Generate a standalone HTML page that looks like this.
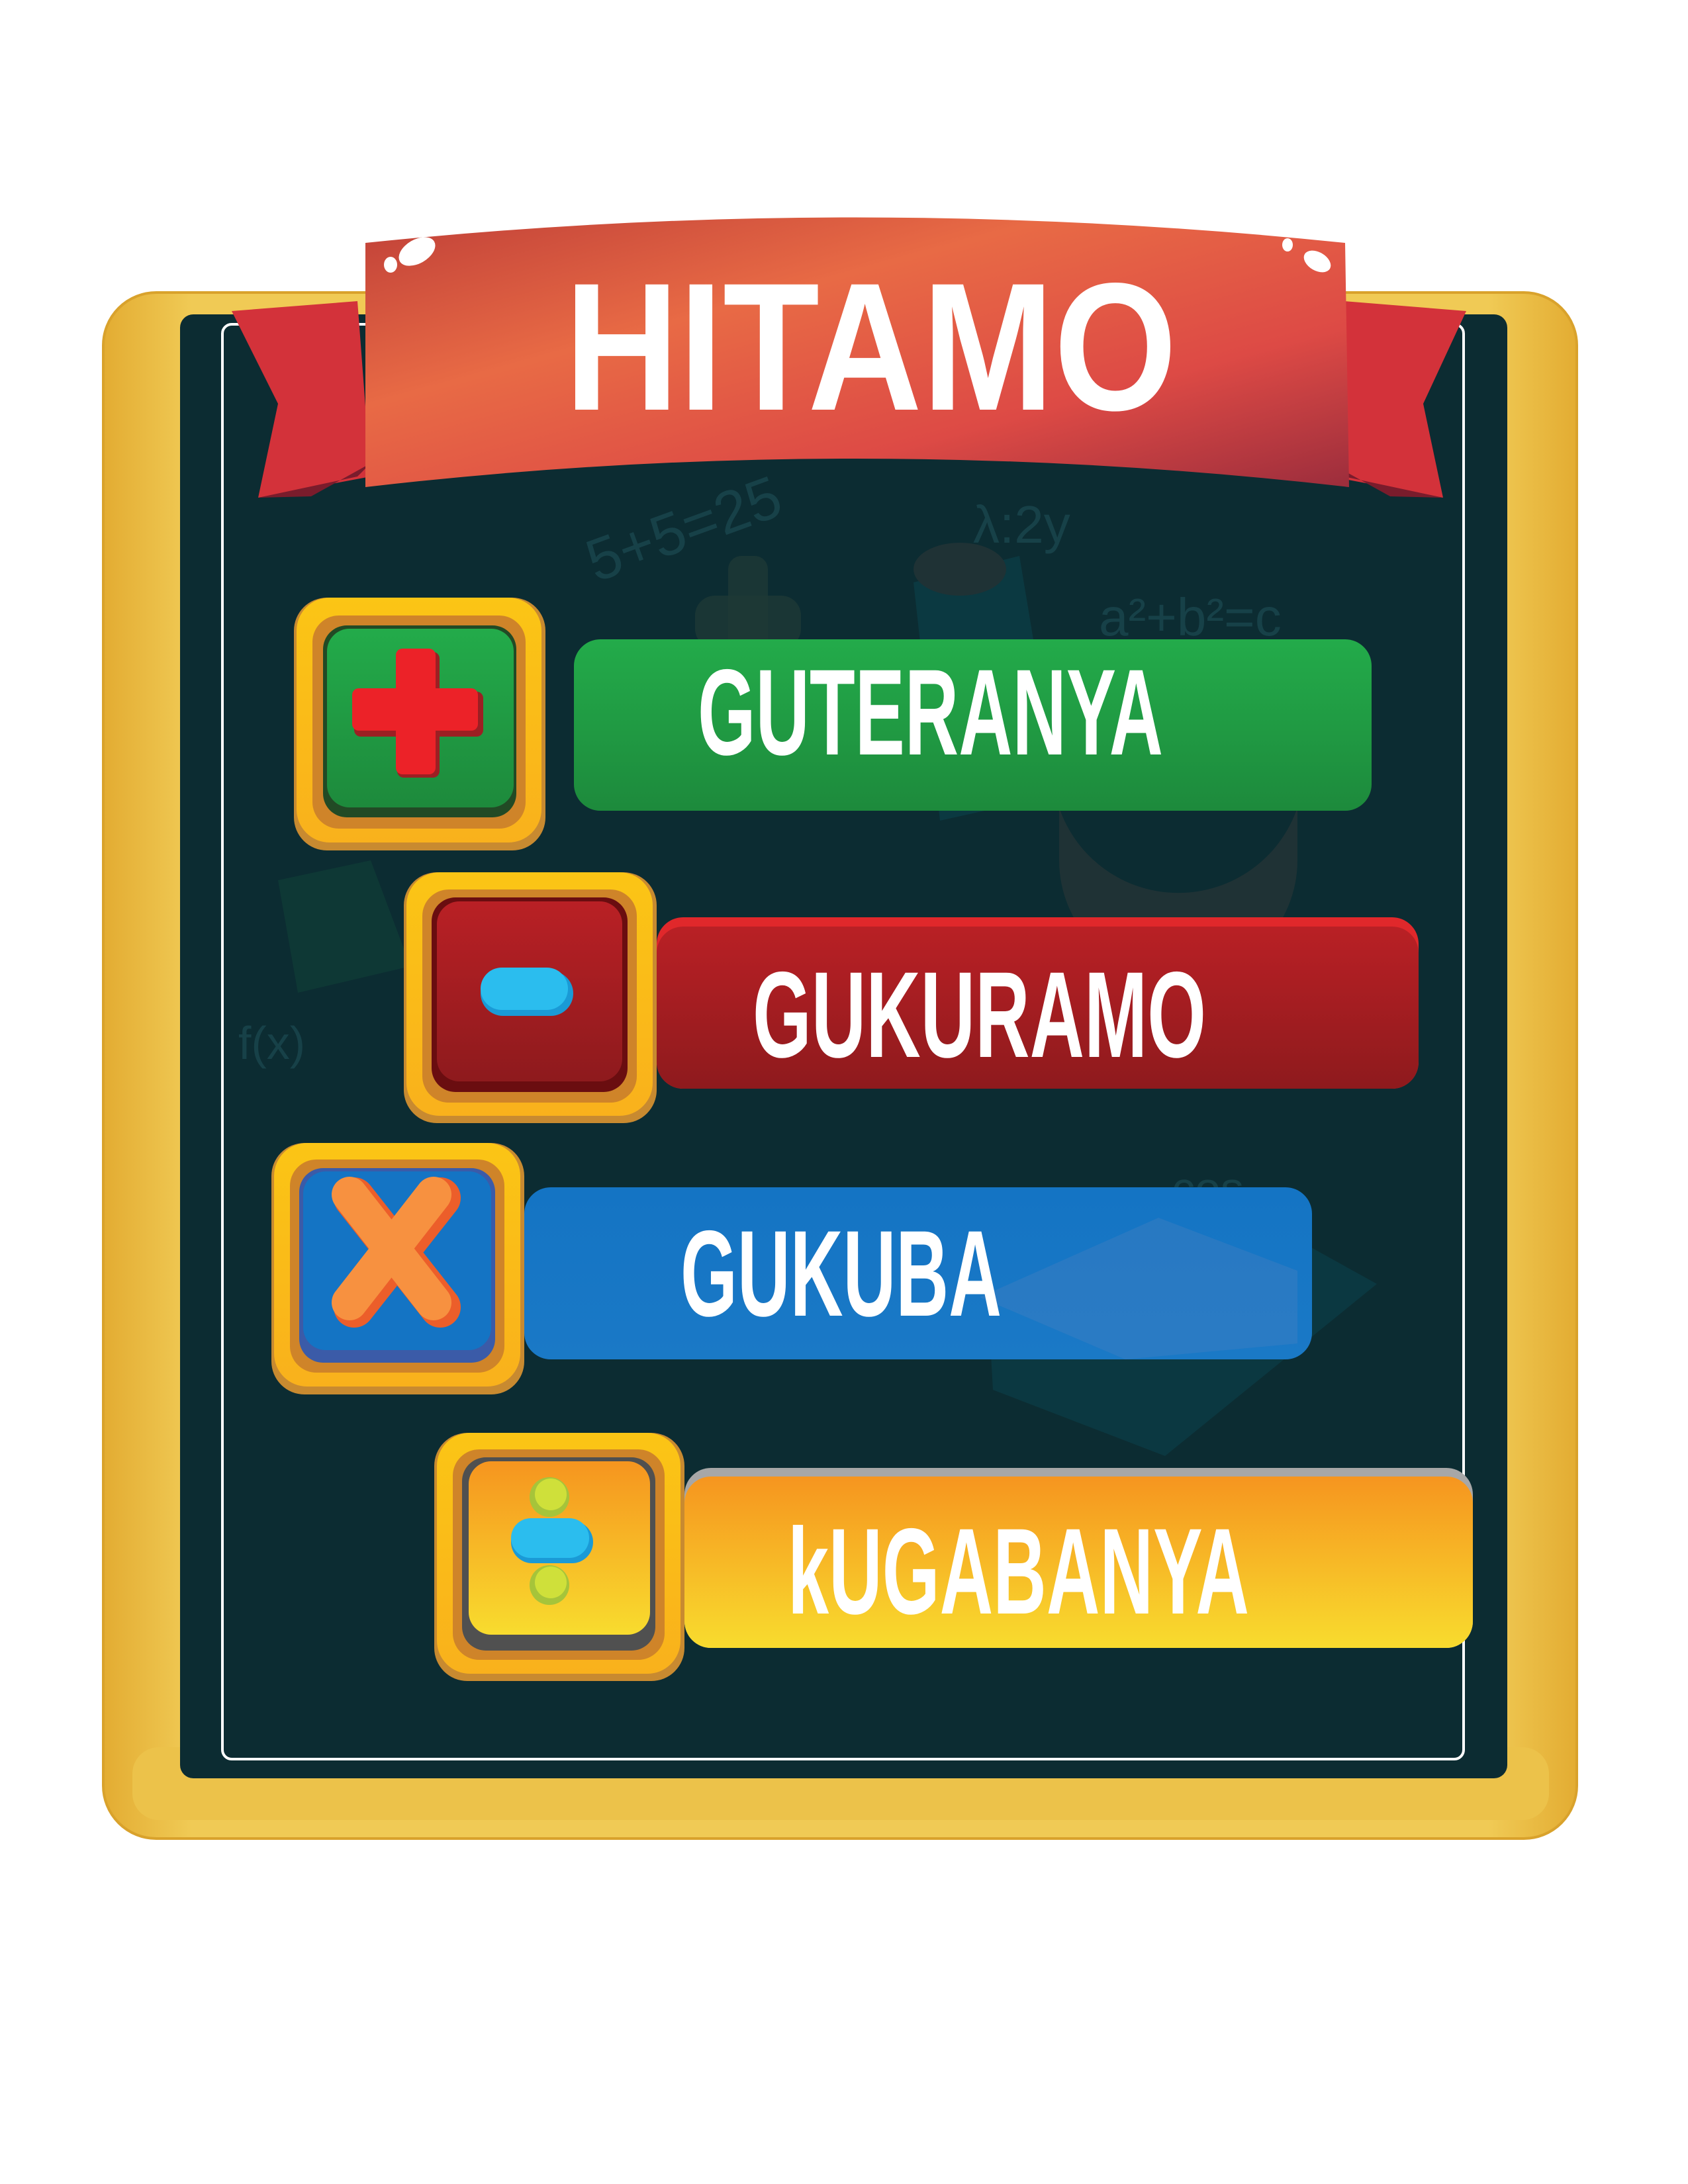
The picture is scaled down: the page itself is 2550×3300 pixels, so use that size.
<!DOCTYPE html>
<html><head><meta charset="utf-8"><style>
html,body{margin:0;padding:0;background:#fff;}
svg{display:block}
</style></head><body>
<svg width="2550" height="3300" viewBox="0 0 2550 3300" xmlns="http://www.w3.org/2000/svg">
<defs>
<linearGradient id="gold" x1="0" y1="0" x2="1" y2="0">
<stop offset="0" stop-color="#e3ac32"/><stop offset="0.06" stop-color="#f0ca55"/><stop offset="0.94" stop-color="#f0ca55"/><stop offset="1" stop-color="#e3ac32"/></linearGradient>
<linearGradient id="ban" x1="0" y1="0" x2="1" y2="1">
<stop offset="0" stop-color="#c04038"/><stop offset="0.35" stop-color="#e86a45"/><stop offset="0.7" stop-color="#dd4a45"/><stop offset="1" stop-color="#9c2d3c"/></linearGradient>
<linearGradient id="gr" x1="0" y1="0" x2="0" y2="1"><stop offset="0" stop-color="#23ab4a"/><stop offset="1" stop-color="#1d8a3c"/></linearGradient>
<linearGradient id="rd" x1="0" y1="0" x2="0" y2="1"><stop offset="0" stop-color="#b92025"/><stop offset="1" stop-color="#8e1a1d"/></linearGradient>
<linearGradient id="bl" x1="0" y1="0" x2="0" y2="1"><stop offset="0" stop-color="#1474c4"/><stop offset="1" stop-color="#1a79c6"/></linearGradient>
<linearGradient id="or" x1="0" y1="0" x2="0" y2="1"><stop offset="0" stop-color="#f6951f"/><stop offset="1" stop-color="#f8dc2e"/></linearGradient>
<linearGradient id="gb" x1="0" y1="0" x2="0" y2="1"><stop offset="0" stop-color="#fbc515"/><stop offset="1" stop-color="#f9b11c"/></linearGradient>
</defs>
<!-- frame -->
<rect x="156" y="442" width="2226" height="2336" rx="80" fill="url(#gold)" stroke="#d9a22c" stroke-width="4"/>
<rect x="200" y="2640" width="2140" height="110" rx="40" fill="#ecc24a"/>
<!-- board -->
<rect x="272" y="475" width="2005" height="2212" rx="20" fill="#0c2c32"/>
<rect x="336" y="490" width="1875" height="2168" rx="14" fill="none" stroke="#fff" stroke-width="4"/>
<!-- faint doodles -->
<g opacity="0.7">
<text x="900" y="880" font-family="Liberation Sans" font-size="90" fill="#1d4a52" transform="rotate(-20 900 880)">5+5=25</text>
<text x="1470" y="820" font-family="Liberation Sans" font-size="80" fill="#1d4a52">λ:2y</text>
<text x="1660" y="960" font-family="Liberation Sans" font-size="80" fill="#1d4a52">a²+b²=c</text>
<text x="1770" y="1820" font-family="Liberation Sans" font-size="70" fill="#1d4a52">cos</text>
<text x="360" y="1600" font-family="Liberation Sans" font-size="70" fill="#1d4a52">f(x)</text>
</g>
<path d="M1380 880 L1540 840 L1600 1200 L1420 1240Z" fill="#0b3d45" opacity="0.8"/>
<ellipse cx="1450" cy="860" rx="70" ry="40" fill="#1f3235"/>
<rect x="1050" y="900" width="160" height="80" rx="30" fill="#1e3a36" opacity="0.8"/>
<rect x="1100" y="840" width="60" height="200" rx="20" fill="#1e3a36" opacity="0.8"/>
<path d="M1600 1220 A190 190 0 0 0 1960 1220 L1960 1300 A180 180 0 0 1 1600 1300Z" fill="#1f3235"/>
<path d="M420 1330 L560 1300 L620 1460 L450 1500Z" fill="#0f3c36" opacity="0.8"/>
<path d="M1490 1920 L1900 1840 L2080 1940 L1760 2200 L1500 2100Z" fill="#0b3c45" opacity="0.8"/>
<!-- ribbon tails -->
<path d="M350 470 L540 455 L560 720 L390 752 L420 610Z" fill="#d3323a"/>
<path d="M390 752 L540 720 L560 700 L470 750Z" fill="#7a1c2c"/>
<path d="M2215 470 L2030 455 L2010 720 L2180 752 L2150 610Z" fill="#d3323a"/>
<path d="M2180 752 L2030 720 L2010 700 L2100 750Z" fill="#7a1c2c"/>
<!-- banner -->
<path d="M552 367 Q1290 290 2032 367 L2038 736 Q1290 650 552 736 Z" fill="url(#ban)"/>
<ellipse cx="630" cy="380" rx="30" ry="18" fill="#fff" transform="rotate(-30 630 380)"/>
<ellipse cx="590" cy="400" rx="10" ry="12" fill="#fff"/>
<ellipse cx="1990" cy="395" rx="22" ry="14" fill="#fff" transform="rotate(30 1990 395)"/>
<ellipse cx="1945" cy="370" rx="8" ry="10" fill="#fff"/>
<text x="853" y="619" font-family="Liberation Sans" font-weight="bold" font-size="275" fill="#fff" textLength="925" lengthAdjust="spacingAndGlyphs">HITAMO</text>

<!-- GREEN -->
<rect x="867" y="966" width="1205" height="259" rx="40" fill="url(#gr)"/>
<rect x="444" y="903" width="380" height="382" rx="50" fill="#c88a30"/>
<rect x="448" y="903" width="370" height="370" rx="50" fill="url(#gb)"/>
<rect x="472" y="930" width="322" height="322" rx="40" fill="#cf8429"/>
<rect x="488" y="945" width="292" height="290" rx="36" fill="#224a25"/>
<rect x="494" y="950" width="282" height="270" rx="34" fill="url(#gr)"/>
<rect x="600" y="985" width="64" height="190" rx="10" fill="#9c1f23"/>
<rect x="535" y="1045" width="195" height="68" rx="10" fill="#9c1f23"/>
<rect x="598" y="980" width="60" height="190" rx="10" fill="#ec2228"/>
<rect x="532" y="1040" width="190" height="64" rx="10" fill="#ec2228"/>
<text x="1054" y="1140" font-family="Liberation Sans" font-weight="bold" font-size="185" fill="#fff" textLength="703" lengthAdjust="spacingAndGlyphs">GUTERANYA</text>

<!-- RED -->
<rect x="992" y="1386" width="1151" height="259" rx="40" fill="#e0282b"/>
<rect x="992" y="1400" width="1151" height="245" rx="40" fill="url(#rd)"/>
<rect x="610" y="1318" width="382" height="379" rx="50" fill="#c88a30"/>
<rect x="614" y="1318" width="372" height="368" rx="50" fill="url(#gb)"/>
<rect x="638" y="1344" width="324" height="322" rx="40" fill="#cf8429"/>
<rect x="652" y="1356" width="296" height="294" rx="36" fill="#6a0d10"/>
<rect x="660" y="1362" width="280" height="272" rx="34" fill="url(#rd)"/>
<rect x="726" y="1467" width="140" height="68" rx="34" fill="#1a9ad6"/>
<rect x="726" y="1462" width="132" height="64" rx="32" fill="#2bbdee"/>
<text x="1137" y="1597" font-family="Liberation Sans" font-weight="bold" font-size="185" fill="#fff" textLength="685" lengthAdjust="spacingAndGlyphs">GUKURAMO</text>

<!-- BLUE -->
<rect x="792" y="1794" width="1190" height="260" rx="40" fill="url(#bl)"/>
<path d="M1480 1960 L1750 1840 L1960 1920 L1960 2030 L1700 2054 Z" fill="#4a80c0" opacity="0.35"/>
<rect x="410" y="1727" width="382" height="380" rx="50" fill="#c88a30"/>
<rect x="414" y="1727" width="372" height="368" rx="50" fill="url(#gb)"/>
<rect x="438" y="1752" width="324" height="322" rx="40" fill="#cf8429"/>
<rect x="452" y="1765" width="296" height="294" rx="36" fill="#3b5ba8"/>
<rect x="458" y="1770" width="284" height="270" rx="34" fill="#1474c4"/>
<g stroke-linecap="round">
<path d="M535 1810 L665 1975 M665 1810 L535 1975" stroke="#ec5e2a" stroke-width="62"/>
<path d="M528 1805 L655 1968 M655 1805 L528 1968" stroke="#f79140" stroke-width="54"/>
</g>
<text x="1028" y="1988" font-family="Liberation Sans" font-weight="bold" font-size="185" fill="#fff" textLength="485" lengthAdjust="spacingAndGlyphs">GUKUBA</text>

<!-- ORANGE -->
<rect x="1034" y="2218" width="1191" height="272" rx="40" fill="#a7a7a7"/>
<rect x="1034" y="2231" width="1191" height="259" rx="40" fill="url(#or)"/>
<rect x="656" y="2165" width="378" height="375" rx="50" fill="#c88a30"/>
<rect x="660" y="2165" width="368" height="364" rx="50" fill="url(#gb)"/>
<rect x="684" y="2190" width="320" height="318" rx="40" fill="#cf8429"/>
<rect x="698" y="2202" width="292" height="292" rx="36" fill="#505050"/>
<rect x="708" y="2208" width="274" height="262" rx="34" fill="url(#or)"/>
<circle cx="830" cy="2262" r="30" fill="#a6c43a"/><circle cx="832" cy="2258" r="24" fill="#cfe03a"/>
<circle cx="830" cy="2395" r="30" fill="#a6c43a"/><circle cx="832" cy="2391" r="24" fill="#cfe03a"/>
<rect x="772" y="2298" width="124" height="64" rx="32" fill="#1a9ad6"/>
<rect x="772" y="2294" width="118" height="60" rx="30" fill="#2bbdee"/>
<text x="1190" y="2438" font-family="Liberation Sans" font-weight="bold" font-size="185" fill="#fff" textLength="697" lengthAdjust="spacingAndGlyphs">kUGABANYA</text>
</svg>
</body></html>
